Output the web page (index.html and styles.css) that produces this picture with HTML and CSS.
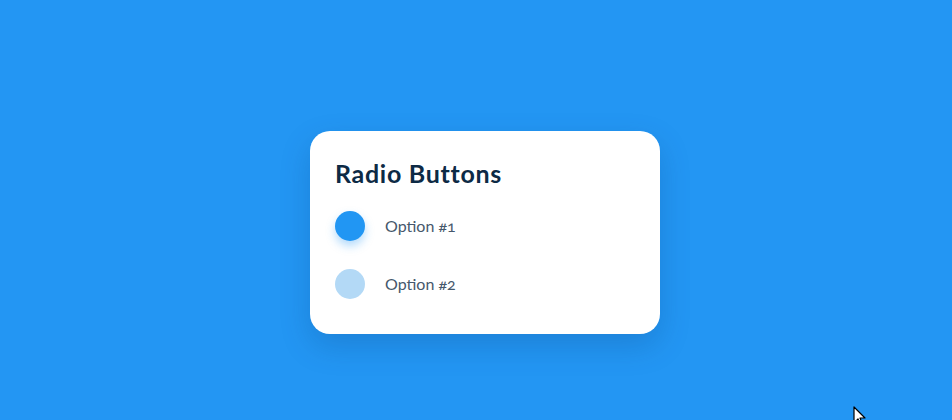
FILE: index.html
```html
<!DOCTYPE html>
<html>
<head>
<meta charset="utf-8">
<link rel="stylesheet" href="styles.css">
</head>
<body>
<div class="stage">
  <div class="card">
    <h1 class="title">Radio Buttons</h1>
    <div class="options">
      <label class="option">
        <span class="radio radio-on"></span>
        <span class="label">Option #1</span>
      </label>
      <label class="option">
        <span class="radio radio-off"></span>
        <span class="label">Option #2</span>
      </label>
    </div>
  </div>
</div>
<svg class="cursor" width="14" height="22" viewBox="0 0 14 22">
  <path d="M1 1 L1 17 L5 13 L8 20 L10 19 L7 12 L12 12 Z" fill="#fff" stroke="#000" stroke-width="1.2" stroke-linejoin="round"/>
</svg>
</body>
</html>
```

FILE: styles.css
```css
html, body {
  margin: 0;
  padding: 0;
}
body {
  width: 952px;
  height: 420px;
  overflow: hidden;
  background: #2396f3;
  font-family: "Lato", "Open Sans", sans-serif;
  position: relative;
}
.stage {
  display: flex;
  padding: 131px 0 0 310px;
}
.card {
  width: 350px;
  box-sizing: border-box;
  background: #fff;
  border-radius: 20px;
  padding: 27px 25px 35px 25px;
  box-shadow: 0 12px 30px rgba(10, 60, 120, 0.22);
}
.title {
  margin: 0 0 23px 0;
  font-size: 25px;
  line-height: 30px;
  font-weight: 700;
  color: #0d2a45;
  letter-spacing: 0.7px;
}
.options {
  display: flex;
  flex-direction: column;
  gap: 28px;
}
.option {
  display: flex;
  align-items: center;
  gap: 20px;
}
.radio {
  width: 30px;
  height: 30px;
  border-radius: 50%;
  flex: none;
}
.radio-on {
  background: #2196f3;
  box-shadow: 0 5px 10px rgba(33, 150, 243, 0.35);
}
.radio-off {
  background: #b3d9f6;
}
.label {
  font-size: 16px;
  font-weight: 400;
  color: #46586c;
  font-variant-numeric: oldstyle-nums;
  position: relative;
  top: -1px;
}
.cursor {
  position: absolute;
  left: 853px;
  top: 406px;
}
```
